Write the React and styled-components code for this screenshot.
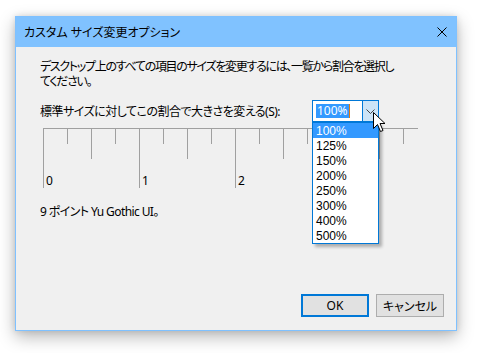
import React from "react";
import styled, { createGlobalStyle } from "styled-components";

const Global = createGlobalStyle`
  html, body { margin: 0; padding: 0; background: #ffffff; }
  body {
    font-family: "Noto Sans", "Noto Sans CJK JP", sans-serif;
    font-size: 12px;
    color: #000;
  }
`;

const jp = `"Noto Sans", "Noto Sans CJK JP", sans-serif`;

const Page = styled.div`
  padding: 16px 0 0 15px;
  height: 353px;
  box-sizing: border-box;
`;

const Window = styled.div`
  position: relative;
  width: 442px;
  height: 315px;
  box-sizing: border-box;
  border: 1px solid #7fc1ff;
  background: #f0f0f0;
  display: flex;
  flex-direction: column;
  box-shadow: 0 6px 16px rgba(0, 0, 0, 0.28), 0 0 6px rgba(0, 0, 0, 0.12);
`;

const TitleBar = styled.div`
  height: 30px;
  flex: none;
  background: #80c2ff;
  display: flex;
  align-items: center;
  justify-content: space-between;
  padding: 0 9px 0 8px;
`;

const Title = styled.div`
  font-family: ${jp};
  font-feature-settings: "palt";
  font-size: 12px;
  line-height: 15px;
`;

const Close = styled.svg`
  width: 10px;
  height: 10px;
  display: block;
`;

const Body = styled.div`
  flex: 1;
  display: flex;
  flex-direction: column;
  padding: 12px 12px 13px 24px;
`;

const Text = styled.p`
  margin: ${(p) => p.$mt || 0}px 0 0 0;
  font-family: ${jp};
  font-feature-settings: "palt";
  font-size: 12px;
  line-height: 15px;
  letter-spacing: ${(p) => p.$ls || 0}px;
  white-space: pre-line;
`;

const Row = styled.div`
  margin-top: 11px;
  display: grid;
  grid-template-columns: 272px 67px;
  align-items: center;
  height: 22px;
`;

const Combo = styled.div`
  position: relative;
  height: 22px;
  box-sizing: border-box;
  border: 1px solid #0078d7;
  background: #fff;
  display: flex;
  z-index: 2;
`;

const Field = styled.div`
  flex: 1;
  display: flex;
  align-items: center;
  padding-left: 3px;
`;

const Selected = styled.span`
  background: #3399ff;
  color: #fff;
  font-family: ${jp};
  font-size: 12px;
  line-height: 14px;
  padding: 0 1px;
  border-right: 1px solid #e0780f;
`;

const DropButton = styled.div`
  width: 16px;
  box-sizing: border-box;
  background: #cce4f7;
  border-left: 1px solid #0078d7;
  display: flex;
  align-items: center;
  justify-content: center;
`;

const List = styled.ul`
  position: absolute;
  top: 21px;
  left: -1px;
  right: -1px;
  margin: 0;
  padding: 0;
  list-style: none;
  background: #fff;
  border: 1px solid #0078d7;
  box-shadow: 3px 3px 3px rgba(0, 0, 0, 0.28);
`;

const Item = styled.li`
  height: 15px;
  line-height: 16px;
  padding-left: 3px;
  font-family: "Liberation Sans", Arial, sans-serif;
  font-size: 12px;
  background: ${(p) => (p.$active ? "#3399ff" : "transparent")};
  color: ${(p) => (p.$active ? "#fff" : "#000")};
`;

const RulerSvg = styled.svg`
  display: block;
  margin: 6px 0 0 3px;
`;

const Buttons = styled.div`
  margin-top: auto;
  display: flex;
  justify-content: flex-end;
  gap: 7px;
`;

const Button = styled.button`
  width: 68px;
  height: 23px;
  box-sizing: border-box;
  background: #e1e1e1;
  border: ${(p) => (p.$primary ? "2px solid #0078d7" : "1px solid #adadad")};
  font-family: ${jp};
  font-feature-settings: "palt";
  font-size: 12px;
  color: #000;
  padding: 0;
  margin: 0;
`;

const Cursor = styled.svg`
  position: absolute;
  left: 357px;
  top: 95px;
  z-index: 5;
`;

const options = ["100%", "125%", "150%", "200%", "250%", "300%", "400%", "500%"];

function Ruler() {
  const ticks = [];
  for (let i = 0; i <= 15; i++) {
    const x = i * 24 + 0.5;
    const h = i % 4 === 0 ? 60 : i % 2 === 0 ? 31 : 16;
    ticks.push(<line key={i} x1={x} y1={0} x2={x} y2={h} stroke="#a0a0a0" strokeWidth="1" />);
  }
  const labels = [0, 1, 2].map((n) => (
    <text
      key={n}
      x={n * 96 + 3}
      y={57}
      fontFamily='"Noto Sans", sans-serif'
      fontSize="12"
      fill="#000"
    >
      {n}
    </text>
  ));
  return (
    <RulerSvg width="376" height="61" viewBox="0 0 376 61">
      <line x1="0" y1="0.5" x2="375" y2="0.5" stroke="#a0a0a0" strokeWidth="1" />
      {ticks}
      {labels}
    </RulerSvg>
  );
}

export default function App() {
  return (
    <>
      <Global />
      <Page>
        <Window>
          <TitleBar>
            <Title>カスタム サイズ変更オプション</Title>
            <Close viewBox="0 0 10 10">
              <path d="M0.5 0.5 L9.5 9.5 M9.5 0.5 L0.5 9.5" stroke="#000" strokeWidth="1" />
            </Close>
          </TitleBar>
          <Body>
            <Text $ls={-1.3}>
              {"デスクトップ上のすべての項目のサイズを変更するには、一覧から割合を選択し\nてください。"}
            </Text>
            <Row>
              <Text $ls={-0.5}>標準サイズに対してこの割合で大きさを変える(S):</Text>
              <Combo>
                <Field>
                  <Selected>100%</Selected>
                </Field>
                <DropButton>
                  <svg width="9" height="5" viewBox="0 0 9 5">
                    <path d="M0.5 0.5 L4.5 4.5 L8.5 0.5" fill="none" stroke="#444" strokeWidth="1" />
                  </svg>
                </DropButton>
                <List>
                  {options.map((o, i) => (
                    <Item key={o} $active={i === 0}>
                      {o}
                    </Item>
                  ))}
                </List>
              </Combo>
            </Row>
            <Ruler />
            <Text $mt={15} $ls={-0.6}>9 ポイント Yu Gothic UI。</Text>
            <Buttons>
              <Button $primary>OK</Button>
              <Button>キャンセル</Button>
            </Buttons>
          </Body>
          <Cursor width="13" height="21" viewBox="0 0 13 21">
            <path
              d="M0.5 0.5 L0.5 16.5 L4.5 12.5 L7.5 19.5 L10 18.5 L7 11.5 L12 11.5 Z"
              fill="#fff"
              stroke="#000"
              strokeWidth="1"
              strokeLinejoin="miter"
            />
          </Cursor>
        </Window>
      </Page>
    </>
  );
}
